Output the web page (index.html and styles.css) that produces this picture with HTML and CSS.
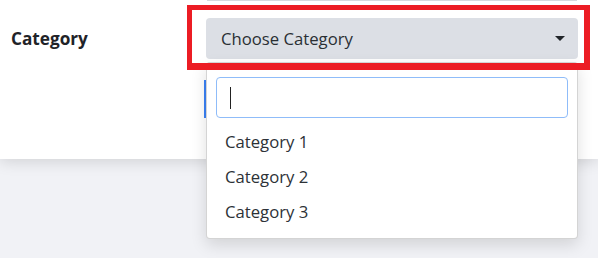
FILE: index.html
```html
<!DOCTYPE html>
<html lang="en">
<head>
<meta charset="utf-8">
<title>Category</title>
<link rel="stylesheet" href="styles.css">
</head>
<body>
<div class="panel">
  <div class="prev-edge"></div>
  <div class="row">
    <label class="label">Category</label>
    <div class="field">
      <div class="select">
        <span class="select-text">Choose Category</span>
        <span class="caret"></span>
      </div>
      <div class="focus-edge"></div>
      <div class="menu">
        <div class="search"><span class="cursor"></span></div>
        <ul class="items">
          <li class="item">Category 1</li>
          <li class="item">Category 2</li>
          <li class="item">Category 3</li>
        </ul>
      </div>
      <div class="highlight"></div>
    </div>
  </div>
</div>
</body>
</html>
```

FILE: styles.css
```css
* { box-sizing: border-box; }
html, body { margin: 0; padding: 0; }
body {
  background: #f1f2f6;
  font-family: "Open Sans", "Noto Sans", "DejaVu Sans", sans-serif;
  color: #212529;
  height: 258px;
  overflow: hidden;
}
.panel {
  position: relative;
  background: #fff;
  height: 159px;
  box-shadow: 0 3px 14px rgba(0, 0, 0, 0.13);
}
.prev-edge {
  position: absolute;
  left: 207px;
  top: 0;
  width: 370px;
  height: 1px;
  background: #d6d9de;
}
.row {
  display: flex;
  padding: 18px 0 0 11px;
}
.label {
  width: 195px;
  font-weight: 700;
  font-size: 17.2px;
  line-height: 41px;
  color: #1f2328;
}
.field {
  position: relative;
  width: 372px;
}
.select {
  display: flex;
  align-items: center;
  justify-content: space-between;
  height: 41px;
  padding: 0 13px 0 15px;
  background: #dcdfe5;
  border-radius: 4px;
  font-size: 16.7px;
  color: #2a2f34;
}
.caret {
  width: 0;
  height: 0;
  border-left: 5px solid transparent;
  border-right: 5px solid transparent;
  border-top: 5px solid #212529;
}
.focus-edge {
  position: absolute;
  left: -2px;
  top: 62px;
  width: 2px;
  height: 38px;
  background: #3b82f6;
}
.menu {
  position: absolute;
  left: 0;
  top: 44px;
  width: 372px;
  height: 177px;
  background: #fff;
  border: 1px solid rgba(0, 0, 0, 0.17);
  border-radius: 4px;
  box-shadow: 0 6px 16px rgba(0, 0, 0, 0.13);
  padding: 14px 9px 8px;
  z-index: 2;
}
.search {
  height: 41px;
  border: 1px solid #8fbcf9;
  border-radius: 4px;
  display: flex;
  align-items: center;
  padding-left: 13px;
}
.cursor {
  width: 1px;
  height: 22px;
  background: #222;
}
.items {
  list-style: none;
  margin: 6px 0 0;
  padding: 0;
}
.item {
  height: 35px;
  line-height: 35px;
  padding-left: 9px;
  font-size: 16.7px;
  color: #2d3237;
}
.highlight {
  position: absolute;
  left: -19px;
  top: -13px;
  width: 403px;
  height: 65px;
  border-style: solid;
  border-color: #ec1c24;
  border-width: 5px 6px 7px 5px;
  z-index: 3;
  pointer-events: none;
}
```
